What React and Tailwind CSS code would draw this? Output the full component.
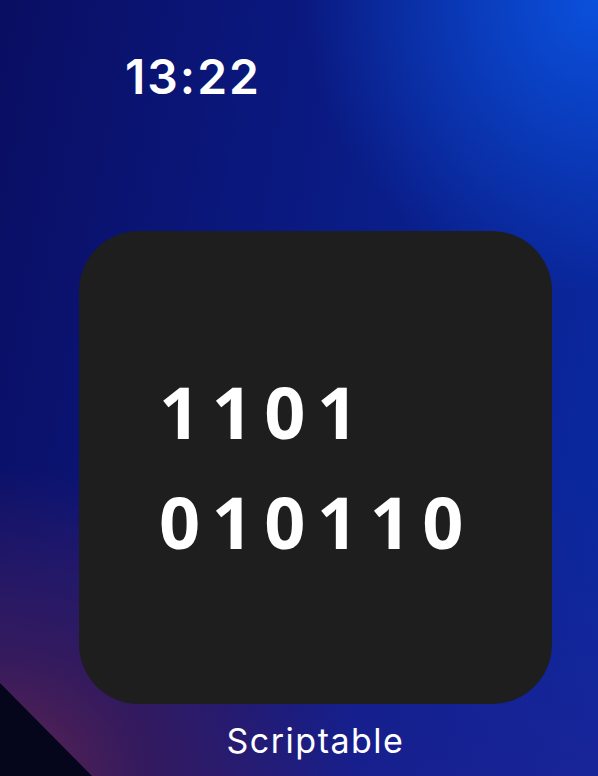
export default function App() {
  return (
    <div
      className="relative w-[598px] h-[776px] overflow-hidden bg-[radial-gradient(circle_at_100%_0%,#0a50dc_0%,rgba(10,60,200,0)_30%),radial-gradient(ellipse_60%_40%_at_0%_100%,#5e2450_0%,#341a5e_40%,rgba(40,20,100,0)_100%),linear-gradient(180deg,rgba(40,30,140,0)_60%,rgba(40,30,140,0.45)_100%),linear-gradient(100deg,#0a0e62_0%,#0a187e_40%,#0a2aa2_100%)]"
      style={{ fontFamily: "Inter, 'Noto Sans', sans-serif" }}
    >
      {/* dark wedge bottom-left */}
      <svg className="absolute left-0 bottom-0" width="110" height="100" viewBox="0 0 110 100">
        <polygon points="0,7 92,100 0,100" fill="#05061c" />
      </svg>

      <div className="relative flex flex-col pl-[79px] pt-[53px]">
        <div className="ml-[46px] text-[48px] leading-none font-semibold text-white tracking-[2px]">13:22</div>

        <div className="mt-[130px] w-[473px] h-[473px] rounded-[60px] bg-[#1e1e1f] pl-[80px] pt-[125px]">
          <div
            className="text-white font-bold text-[72px] leading-[110px] tracking-[11.5px]"
            style={{ fontFamily: "'Open Sans', sans-serif" }}
          >
            <div>1101</div>
            <div>010110</div>
          </div>
        </div>

        <div className="w-[473px] mt-[20px] text-center text-white text-[34px] leading-none tracking-[1.5px]">Scriptable</div>
      </div>
    </div>
  );
}
